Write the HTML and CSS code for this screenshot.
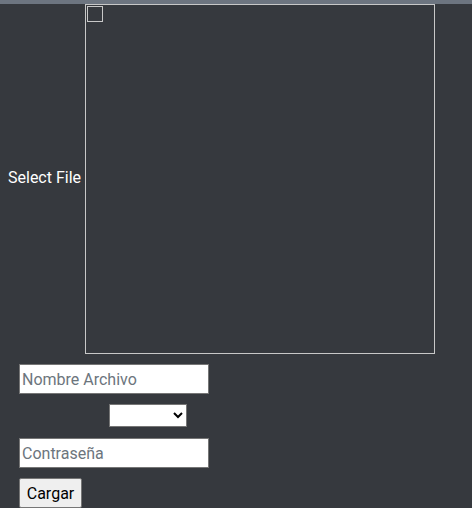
FILE: index.html
```html
<!DOCTYPE html>
<html>
<head>
<meta charset="utf-8">
<link rel="stylesheet" href="styles.css">
</head>
<body>
<div class="topbar"></div>
<div class="upload-row">
  <label class="upload-label">Select File</label>
  <div class="dropzone">
    <span class="fake-check"></span>
  </div>
</div>
<form class="form">
  <input class="field" type="text" placeholder="Nombre Archivo">
  <div class="select-row"><select class="select"><option></option></select></div>
  <input class="field" type="password" placeholder="Contraseña">
  <button class="btn" type="button">Cargar</button>
</form>
</body>
</html>
```
FILE: styles.css
```css
html, body {
  margin: 0;
  padding: 0;
  background: #36393e;
  font-family: Roboto, "Liberation Sans", sans-serif;
  font-size: 16px;
  color: #ffffff;
}
.topbar {
  height: 4px;
  background: #6d7580;
}
.upload-row {
  display: flex;
  align-items: center;
  padding-left: 8px;
  gap: 4px;
}
.upload-label {
  font-size: 16px;
  color: #fff;
  margin-bottom: 3px;
}
.dropzone {
  width: 346px;
  height: 346px;
  border: 1px solid #c8c8c8;
  padding: 1px;
  box-sizing: content-box;
  display: flex;
  align-items: flex-start;
}
.fake-check {
  width: 14px;
  height: 14px;
  border: 1px solid #c8c8c8;
  display: block;
}
.form {
  display: flex;
  flex-direction: column;
  align-items: flex-start;
  padding: 10px 0 0 19px;
  gap: 10px;
}
.field {
  width: 190px;
  height: 30px;
  box-sizing: border-box;
  border: 1px solid #767676;
  background: #fff;
  font-family: Roboto, "Liberation Sans", sans-serif;
  font-size: 16px;
  padding: 1px 2px;
  margin: 0;
}
.field::placeholder {
  color: #6c757d;
}
.select-row {
  padding-left: 90px;
  margin-bottom: 1px;
}
.select {
  width: 78px;
  height: 23px;
  box-sizing: border-box;
  border: 1px solid #767676;
  background: #fff;
  margin: 0;
}
.btn {
  height: 30px;
  width: 63px;
  box-sizing: border-box;
  padding: 1px 6px;
  margin: 0;
  border: 1px solid #767676;
  background: #efefef;
  font-family: Roboto, "Liberation Sans", sans-serif;
  font-size: 16px;
  color: #000;
  border-radius: 2px;
}
```
